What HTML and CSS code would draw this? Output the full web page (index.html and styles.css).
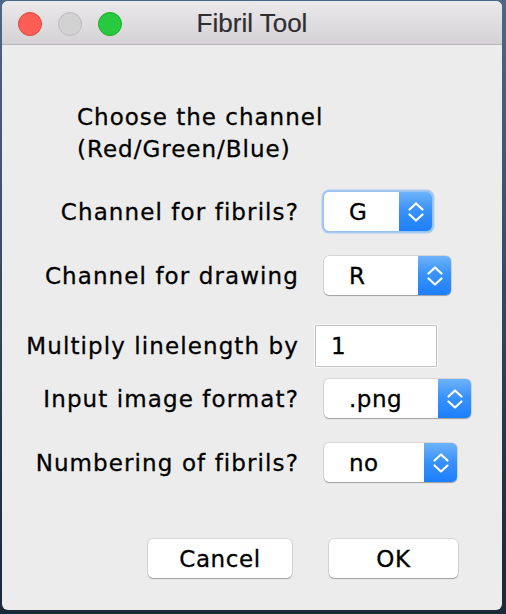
FILE: index.html
```html
<!DOCTYPE html>
<html>
<head>
<meta charset="utf-8">
<link rel="stylesheet" href="styles.css">
</head>
<body>
<div class="window">
  <div class="titlebar">
    <div class="lights">
      <span class="light red"></span>
      <span class="light gray"></span>
      <span class="light green"></span>
    </div>
    <div class="title">Fibril Tool</div>
    <div></div>
  </div>
  <div class="content">
    <div class="intro">Choose the channel<br>(Red/Green/Blue)</div>
    <div class="row r1">
      <div class="label">Channel for fibrils?</div>
      <div class="popup focused w-g"><span class="val">G</span><span class="stepper"><svg width="16" height="22" viewBox="0 0 16 22"><polyline points="1.5,8.5 8,2.5 14.5,8.5"/><polyline points="1.5,13.5 8,19.5 14.5,13.5"/></svg></span></div>
    </div>
    <div class="row r2">
      <div class="label">Channel for drawing</div>
      <div class="popup w-r"><span class="val">R</span><span class="stepper"><svg width="16" height="22" viewBox="0 0 16 22"><polyline points="1.5,8.5 8,2.5 14.5,8.5"/><polyline points="1.5,13.5 8,19.5 14.5,13.5"/></svg></span></div>
    </div>
    <div class="row r3">
      <div class="label">Multiply linelength by</div>
      <div class="field">1</div>
    </div>
    <div class="row r4">
      <div class="label">Input image format?</div>
      <div class="popup w-png"><span class="val">.png</span><span class="stepper"><svg width="16" height="22" viewBox="0 0 16 22"><polyline points="1.5,8.5 8,2.5 14.5,8.5"/><polyline points="1.5,13.5 8,19.5 14.5,13.5"/></svg></span></div>
    </div>
    <div class="row r5">
      <div class="label">Numbering of fibrils?</div>
      <div class="popup w-no"><span class="val">no</span><span class="stepper"><svg width="16" height="22" viewBox="0 0 16 22"><polyline points="1.5,8.5 8,2.5 14.5,8.5"/><polyline points="1.5,13.5 8,19.5 14.5,13.5"/></svg></span></div>
    </div>
    <div class="buttons">
      <div class="btn cancel">Cancel</div>
      <div class="btn ok">OK</div>
    </div>
  </div>
</div>
</body>
</html>
```
FILE: styles.css
```css
html, body {
  margin: 0;
  padding: 0;
}
body {
  width: 506px;
  height: 614px;
  overflow: hidden;
  background: linear-gradient(180deg, #4b6886 0%, #36506b 40%, #22344a 75%, #1b2938 100%);
  font-family: "DejaVu Sans", Verdana, sans-serif;
}
.window {
  margin: 1px 0 0 2px;
  width: 500px;
  height: 609px;
  border-radius: 6px;
  overflow: hidden;
  background: #ececec;
  display: flex;
  flex-direction: column;
}
.titlebar {
  height: 43px;
  flex: none;
  border-bottom: 1px solid #b8b7b8;
  background: linear-gradient(180deg, #ebe9eb 0%, #d4d2d4 100%);
  display: grid;
  grid-template-columns: 1fr auto 1fr;
  align-items: center;
}
.lights {
  display: flex;
  gap: 16px;
  padding-left: 16px;
  padding-top: 2px;
}
.light {
  width: 24px;
  height: 24px;
  border-radius: 50%;
  box-sizing: border-box;
}
.red { background: #fd5f57; border: 1px solid #e0443e; }
.gray { background: #d3d2d3; border: 1px solid #bcbbbc; }
.green { background: #29c93f; border: 1px solid #1aab29; }
.title {
  font-family: "Liberation Sans", Arial, sans-serif;
  font-size: 26px;
  color: #2f2d2f;
  padding-top: 2px;
  -webkit-text-stroke: 0.2px #2f2d2f;
}
.content {
  display: flex;
  flex-direction: column;
  color: #000;
  font-size: 23px;
  letter-spacing: 1px;
  -webkit-text-stroke: 0.3px #000;
}
.intro {
  margin-top: 56px;
  padding-left: 75px;
  line-height: 32px;
}
.row {
  display: grid;
  grid-template-columns: 296px auto;
  column-gap: 17px;
  align-items: center;
  justify-items: start;
}
.label {
  justify-self: end;
  line-height: 30px;
  letter-spacing: 1.1px;
  margin-right: -1px;
}
.r1 { margin-top: 27px; }
.r2 { margin-top: 25px; }
.r3 { margin-top: 30px; }
.r4 { margin-top: 12px; }
.r5 { margin-top: 25px; }
.popup {
  margin-left: 9px;
  height: 39px;
  box-sizing: border-box;
  background: #fff;
  border-radius: 5px;
  box-shadow: 0 0 0 0.5px rgba(0,0,0,0.18), 0 1px 1px rgba(0,0,0,0.25);
  display: flex;
  align-items: stretch;
  overflow: hidden;
}
.popup.focused {
  box-shadow: 0 0 0 1px #9ac0ee, 0 0 0 2.5px #a9cbf3;
}
.w-g { width: 108px; }
.w-r { width: 127px; }
.w-png { width: 147px; }
.w-no { width: 133px; }
.val {
  flex: 1;
  padding-left: 25px;
  display: flex;
  align-items: center;
  letter-spacing: 0.5px;
}
.stepper {
  width: 33px;
  flex: none;
  background: linear-gradient(180deg, #6eb3fa 0%, #3a93fb 45%, #1c7ffb 100%);
  display: flex;
  align-items: center;
  justify-content: center;
}
.stepper svg polyline {
  fill: none;
  stroke: #fff;
  stroke-width: 2.2;
  stroke-linecap: round;
  stroke-linejoin: round;
}
.field {
  width: 122px;
  height: 42px;
  box-sizing: border-box;
  background: #fff;
  border: 1px solid #c4c4c4;
  box-shadow: 0 0 0 1px #f8f8f8;
  padding-left: 15px;
  display: flex;
  align-items: center;
}
.buttons {
  margin-top: 57px;
  padding-left: 146px;
  display: flex;
  gap: 37px;
}
.btn {
  height: 39px;
  box-sizing: border-box;
  background: #fff;
  border-radius: 5px;
  box-shadow: 0 0 0 0.5px rgba(0,0,0,0.18), 0 1px 1px rgba(0,0,0,0.25);
  display: flex;
  align-items: center;
  justify-content: center;
  letter-spacing: 0.6px;
}
.cancel { width: 144px; }
.ok { width: 129px; }
```
